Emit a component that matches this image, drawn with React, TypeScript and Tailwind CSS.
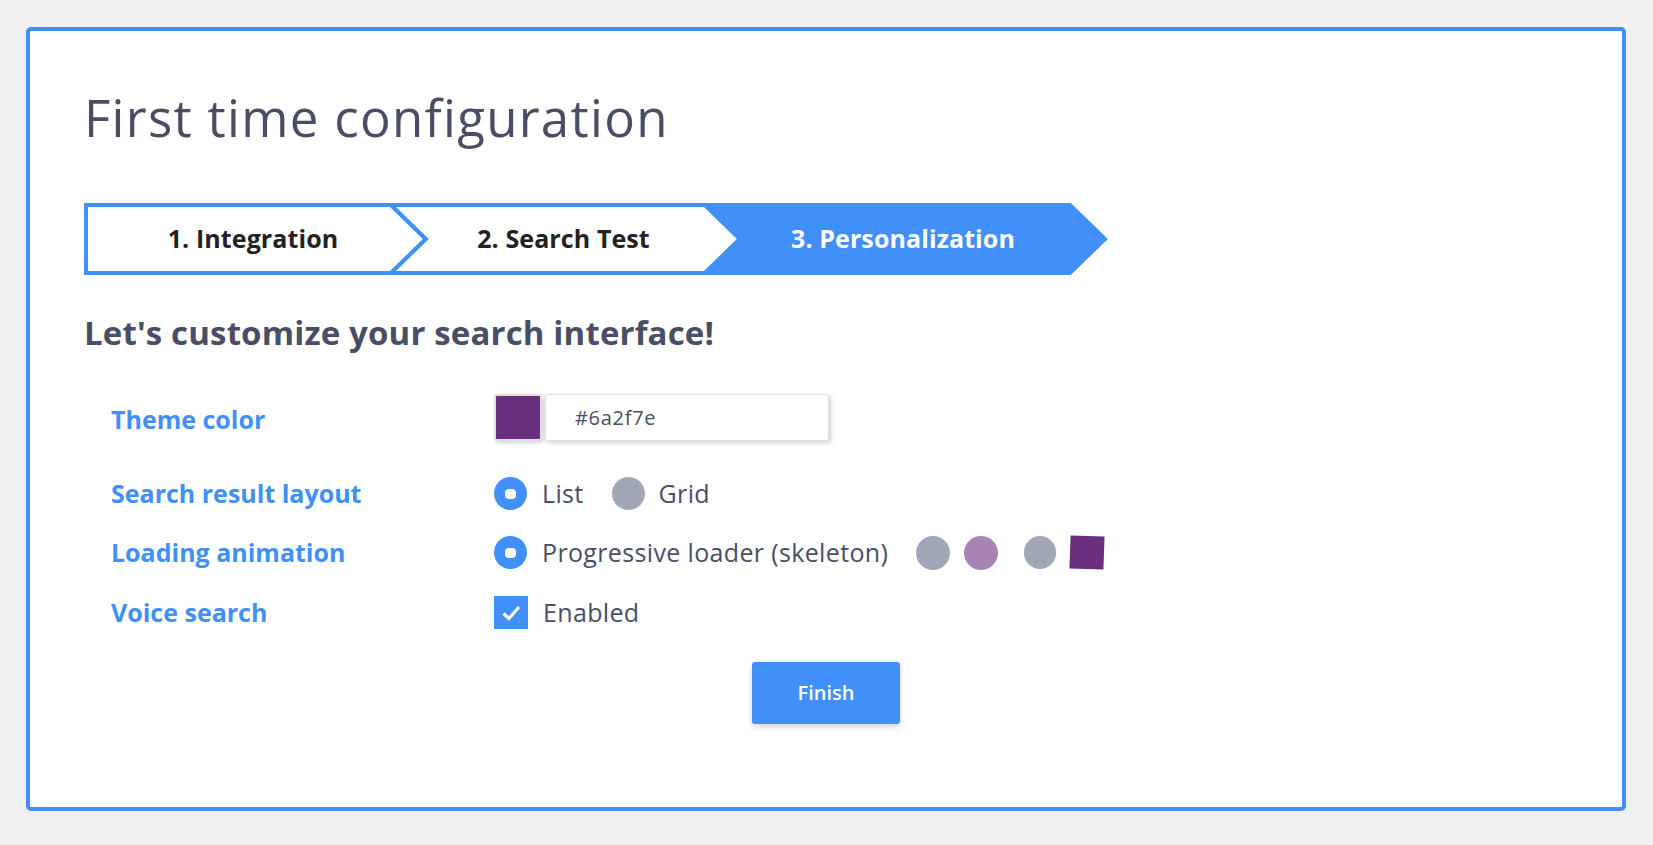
import React from 'react';

const BLUE = '#4190fa';
const INK = '#494e64';

const steps = [
  { label: '1. Integration', w: 344 },
  { label: '2. Search Test', w: 351 },
  { label: '3. Personalization', w: 402 },
];

function Step({ label, w, index, active }: { label: string; w: number; index: number; active: boolean }) {
  const h = 72;
  const pts =
    index === 0
      ? `2,2 ${w - 37},2 ${w - 2},36 ${w - 37},70 2,70`
      : `0,2 ${w - 37},2 ${w - 2},36 ${w - 37},70 0,70 35,36`;
  return (
    <div
      className={`relative flex items-center justify-center pr-[6px] ${index > 0 ? '-ml-[37px]' : ''}`}
      style={{ width: w, height: h }}
    >
      <svg className="absolute inset-0 overflow-visible" width={w} height={h}>
        <polygon points={pts} fill={active ? BLUE : '#fff'} stroke={BLUE} strokeWidth={4} strokeLinejoin="miter" />
      </svg>
      <span className={`relative text-[25px] font-bold tracking-[0.1px] ${active ? 'text-white' : 'text-[#222]'}`}>{label}</span>
    </div>
  );
}

function Radio({ checked }: { checked: boolean }) {
  return checked ? (
    <span className="flex h-[33px] w-[33px] shrink-0 items-center justify-center rounded-full bg-[#4190fa]">
      <span className="h-[10px] w-[11px] rounded-[4px] bg-white" />
    </span>
  ) : (
    <span className="block h-[33px] w-[33px] shrink-0 rounded-full bg-[#a2a7b8]" />
  );
}

function Row({ label, children, className = '', labelClass = '' }: { label: string; children: React.ReactNode; className?: string; labelClass?: string }) {
  return (
    <div className={`flex items-center ${className}`}>
      <div className={`w-[410px] pl-[27px] text-[25px] font-bold leading-[25px] text-[#4190fa] ${labelClass}`}>{label}</div>
      <div className="flex items-center">{children}</div>
    </div>
  );
}

const valueText = 'text-[25px] leading-[25px] tracking-[0.35px] text-[#494e64]';

export default function App() {
  return (
    <div className="min-h-[845px] bg-[#f0f0f0] pt-[27px] pb-[34px]" style={{ fontFamily: '"Open Sans", sans-serif' }}>
      <div className="ml-[26px] flex h-[784px] w-[1600px] flex-col rounded-[5px] border-4 border-[#4190fa] bg-white px-[54px] pt-[61px]">
        <h1 className="text-[51px] font-medium leading-[51px] tracking-[1.3px] text-[#494e64]">First time configuration</h1>

        <div className="mt-[60px] flex">
          {steps.map((s, i) => (
            <Step key={s.label} label={s.label} w={s.w} index={i} active={i === 2} />
          ))}
        </div>

        <h2 className="mt-[41px] text-[33px] font-bold leading-[33px] tracking-[0.15px] text-[#494e64]">Let's customize your search interface!</h2>

        <Row label="Theme color" className="mt-[45px] h-[47px]" labelClass="pt-[4px]">
          <div className="h-[47px] w-[48px] rounded-[3px] border-2 border-[#dedede] bg-[#6a2f7e] shadow-[2px_2px_4px_rgba(0,0,0,0.18)]" />
          <div className="ml-[3px] flex h-[47px] w-[284px] items-center rounded-[3px] border border-[#e0e0e0] bg-white pl-[29px] text-[20px] tracking-[0.7px] shadow-[2px_2px_5px_rgba(0,0,0,0.18)]" style={{ color: INK }}>
            #6a2f7e
          </div>
        </Row>

        <Row label="Search result layout" className="mt-[36px] h-[33px]">
          <Radio checked />
          <span className={`ml-[15px] ${valueText}`}>List</span>
          <span className="ml-[28px] flex"><Radio checked={false} /></span>
          <span className={`ml-[14px] ${valueText}`}>Grid</span>
        </Row>

        <Row label="Loading animation" className="mt-[26px] h-[33px]">
          <Radio checked />
          <span className={`ml-[15px] ${valueText}`}>Progressive loader (skeleton)</span>
          <span className="ml-[28px] h-[34px] w-[34px] rounded-full bg-[#a2a7b8]" />
          <span className="ml-[14px] h-[34px] w-[34px] rounded-full bg-[#a884b4]" />
          <span className="ml-[26px] h-[33px] w-[32px] rounded-full bg-[#a2a7b8]" />
          <span className="ml-[14px] h-[33px] w-[34px] rotate-[2deg] bg-[#6a2f7e]" />
        </Row>

        <Row label="Voice search" className="mt-[27px] h-[33px]">
          <span className="flex h-[33px] w-[34px] items-center justify-center bg-[#4190fa]">
            <svg width="20" height="16" viewBox="0 0 20 16">
              <path d="M2.5 8.5 L8 13.5 L18 2" fill="none" stroke="#fff" strokeWidth="3.2" />
            </svg>
          </span>
          <span className={`ml-[15px] ${valueText}`}>Enabled</span>
        </Row>

        <button className="mt-[33px] h-[62px] w-[148px] self-center rounded-[3px] bg-[#4190fa] text-[20px] font-semibold text-white shadow-[0_3px_6px_rgba(0,0,0,0.16)]">
          Finish
        </button>
      </div>
    </div>
  );
}
